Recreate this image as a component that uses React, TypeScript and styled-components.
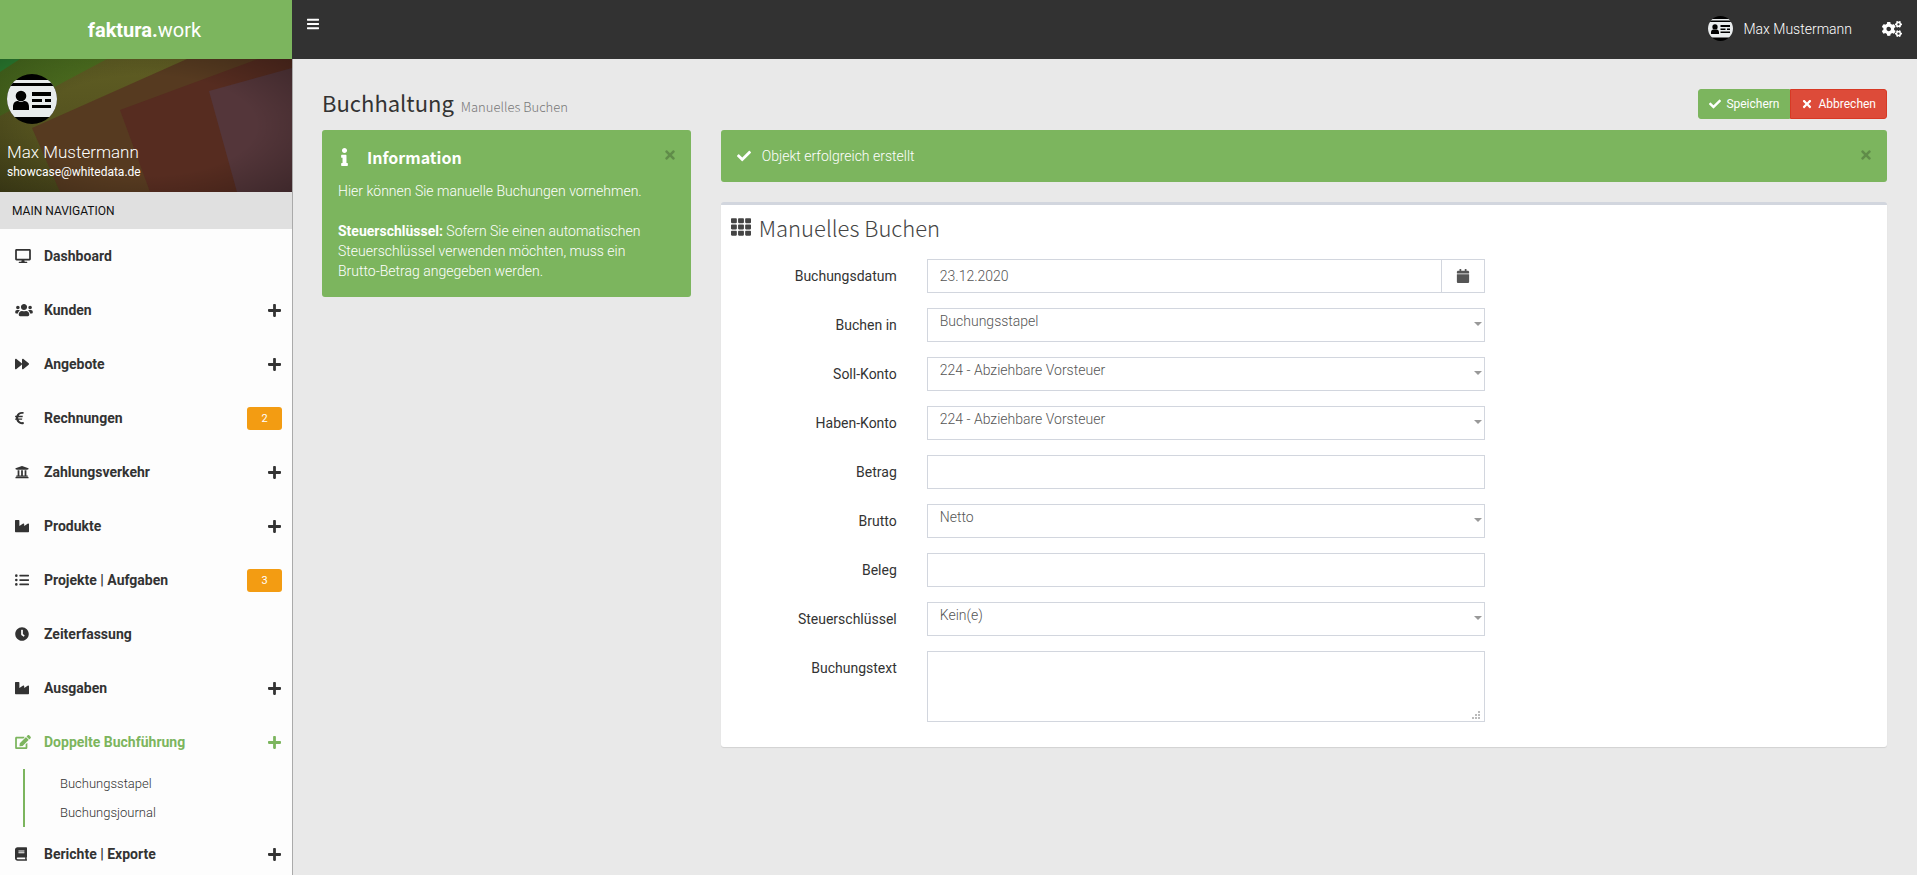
import React from "react";
import styled, { createGlobalStyle, css } from "styled-components";
import {
  FaBars,
  FaBook,
  FaCalendar,
  FaCheck,
  FaClock,
  FaCogs,
  FaDesktop,
  FaEdit,
  FaEuroSign,
  FaForward,
  FaIndustry,
  FaInfo,
  FaListUl,
  FaPlus,
  FaTh,
  FaTimes,
  FaUniversity,
  FaUsers,
} from "react-icons/fa";

const green = "#7cb55e";
const dark = "#333333";
const heading = `"Source Sans Pro", "Noto Sans CJK SC", "Noto Sans", sans-serif`;

const GlobalStyle = createGlobalStyle`
  *, *::before, *::after { box-sizing: border-box; }
  html, body, #root { height: 100%; }
  body {
    margin: 0;
    overflow: hidden;
    background: #e9e9e9;
    color: ${dark};
    font: 300 14px/20px Roboto, sans-serif;
  }
  h1, h2, h3, p, ul { margin: 0; padding: 0; }
  ul { list-style: none; }
  a { color: inherit; text-decoration: none; }
  button, input, select, textarea { font: inherit; margin: 0; border-radius: 0; }
`;

const Icon = styled.span<{ $size?: number; $width?: number }>`
  display: inline-flex;
  align-items: center;
  svg {
    flex: none;
    height: ${(p) => p.$size ?? 14}px;
    width: ${(p) => p.$width ?? p.$size ?? 14}px;
  }
`;

const Shell = styled.div`
  display: flex;
  height: 100%;
`;

const Sidebar = styled.aside`
  flex: 0 0 293px;
  display: flex;
  flex-direction: column;
  overflow: hidden;
  background: #fdfdfd;
`;

const Brand = styled.a`
  flex: 0 0 59px;
  display: flex;
  align-items: center;
  justify-content: center;
  padding-right: 4px;
  background: ${green};
  color: #fff;
  font-size: 20px;
  font-weight: 400;
  b { font-weight: 700; }
`;

const SidebarBody = styled.div`
  flex: 1 0 auto;
  border-right: 1px solid #aaa;
`;

const UserPanel = styled.section`
  position: relative;
  height: 133px;
  padding: 15px 7px;
  color: #fff;
`;

const Backdrop = styled.svg`
  position: absolute;
  inset: 0;
  width: 100%;
  height: 100%;
`;

const UserInfo = styled.div`
  position: relative;
  display: flex;
  flex-direction: column;
`;

const UserName = styled.span`
  margin-top: 18px;
  font-size: 17px;
  font-weight: 300;
`;

const UserMail = styled.span`
  font-size: 12px;
  font-weight: 400;
`;

const NavLabel = styled.h2`
  height: 37px;
  padding: 0 12px;
  background: #e0e0e0;
  color: #111;
  font-size: 12px;
  font-weight: 400;
  line-height: 38px;
`;

const NavLink = styled.a<{ $active?: boolean }>`
  display: flex;
  align-items: center;
  height: 54px;
  padding: 0 11px 0 15px;
  color: ${(p) => (p.$active ? green : dark)};
  font-weight: 700;
`;

const NavIcon = styled(Icon)`
  flex: 0 0 29px;
`;

const NavText = styled.span`
  flex: 1;
`;

const Count = styled.span`
  width: 35px;
  height: 23px;
  border-radius: 3px;
  margin-right: -1px;
  background: #f39c12;
  color: #fff;
  font-size: 11px;
  font-weight: 400;
  line-height: 23px;
  text-align: center;
`;

const SubMenu = styled.ul`
  margin-left: 23px;
  border-left: 2px solid ${green};
`;

const SubLink = styled.a`
  display: block;
  padding: 5px 0 4px 35px;
  font-size: 13px;
`;

const Main = styled.div`
  flex: 1;
  min-width: 0;
  display: flex;
  flex-direction: column;
`;

const TopBar = styled.header`
  flex: 0 0 59px;
  display: flex;
  justify-content: space-between;
  margin-left: -1px;
  background: #323232;
  color: #fff;
`;

const BarButton = styled.button`
  display: flex;
  align-items: center;
  gap: 10px;
  padding: 0 15px;
  border: 0;
  background: none;
  color: #fff;
`;

const MenuButton = styled(BarButton)`
  align-self: flex-start;
  height: 48px;
`;

const Account = styled.div`
  display: flex;
  height: 57px;
`;

const Page = styled.main`
  padding: 30px 30px 30px 29px;
`;

const PageHead = styled.div`
  display: flex;
  align-items: center;
  justify-content: space-between;
  height: 41px;
  padding-bottom: 11px;
`;

const PageTitle = styled.h1`
  font: 400 22px/28px ${heading};
  small {
    padding-left: 2px;
    color: #777;
    font-size: 13px;
    font-weight: 300;
  }
`;

const Actions = styled.div`
  display: flex;
`;

const Action = styled.button<{ $danger?: boolean }>`
  display: flex;
  align-items: center;
  gap: 5px;
  height: 30px;
  padding: 0 10px;
  border: 1px solid ${(p) => (p.$danger ? "#d73925" : green)};
  border-radius: ${(p) => (p.$danger ? "0 3px 3px 0" : "3px 0 0 3px")};
  background: ${(p) => (p.$danger ? "#dd4b39" : green)};
  color: #fff;
  font-size: 12px;
  font-weight: 400;
`;

const Row = styled.div`
  display: flex;
  align-items: flex-start;
  margin: 0 -15px;
`;

const Col = styled.div<{ $share: number }>`
  flex: 0 0 ${(p) => p.$share}%;
  min-width: 0;
  padding: 0 15px;
`;

const Alert = styled.section`
  padding: 16px;
  border-radius: 3px;
  background: ${green};
  color: #fff;
`;

const AlertHead = styled.div`
  display: flex;
  align-items: center;
  min-height: 20px;
`;

const AlertTitle = styled.h3`
  flex: 1;
  font: 700 16px/22px ${heading};
`;

const AlertText = styled.p`
  flex: 1;
  padding-left: 11px;
`;

const InfoText = styled.p`
  margin-top: 13px;
  b { font-weight: 700; }
`;

const NoBreak = styled.span`
  white-space: nowrap;
`;

const InfoIcon = styled(Icon)`
  flex: 0 0 29px;
  padding-left: 3px;
`;

const Close = styled.button`
  align-self: flex-start;
  display: flex;
  padding: 2px 0;
  border: 0;
  background: none;
  color: #000;
  opacity: 0.22;
`;

const Box = styled.section`
  margin-top: 20px;
  border-top: 3px solid #d2d6de;
  border-radius: 3px;
  background: #fff;
  box-shadow: 0 1px 1px rgba(0, 0, 0, 0.1);
`;

const BoxHead = styled.div`
  display: flex;
  align-items: center;
  gap: 8px;
  height: 44px;
  padding: 0 10px;
  color: #444;
`;

const BoxTitle = styled.h2`
  font: 300 22px/28px ${heading};
`;

const Form = styled.form`
  display: flex;
  flex-direction: column;
  gap: 15px;
  padding: 10px 10px 25px;
`;

const Field = styled.div`
  display: flex;
  margin: 0 -15px;
`;

const Label = styled.label`
  flex: 0 0 calc(100% / 6);
  padding: 7px 15px 0;
  font-weight: 400;
  text-align: right;
`;

const Control = styled.div`
  flex: 0 0 50%;
  display: flex;
  position: relative;
  padding: 0 15px;
`;

const control = css`
  display: block;
  flex: 1;
  min-width: 0;
  height: 34px;
  padding: 6px 12px;
  border: 1px solid #d2d6de;
  background: #fff;
  color: #555;
  outline: none;
`;

const Input = styled.input`
  ${control}
`;

const Select = styled.select`
  ${control}
  appearance: none;
  padding: 0 20px 8px 12px;
`;

const Arrow = styled.span`
  position: absolute;
  right: 18px;
  top: 14px;
  border: 4px solid transparent;
  border-top: 4px solid #999;
  border-bottom: 0;
  pointer-events: none;
`;

const TextArea = styled.textarea`
  ${control}
  height: 71px;
  resize: none;
`;

const Grip = styled.svg`
  position: absolute;
  right: 20px;
  bottom: 3px;
  pointer-events: none;
`;

const CalendarButton = styled.button`
  display: flex;
  align-items: center;
  justify-content: center;
  width: 43px;
  border: 1px solid #d2d6de;
  border-left: 0;
  background: #fff;
  color: #555;
`;

const Avatar = ({ size, id }: { size: number; id: string }) => (
  <svg width={size} height={size} viewBox="0 0 50 50" aria-hidden="true">
    <clipPath id={id}>
      <circle cx="25" cy="25" r="25" />
    </clipPath>
    <g clipPath={`url(#${id})`}>
      <rect width="50" height="50" fill="#000" />
      <rect y="6" width="50" height="37" fill="#e9eced" />
      <rect y="9" width="50" height="3" fill="#000" />
      <circle cx="14" cy="22" r="5.3" fill="#000" />
      <path d="M6 36v-3c0-4 2-6 5-6q3 2 6 0c3 0 5 2 5 6v3z" fill="#000" />
      <path d="M25 18h19v4H25zM25 25h10v3H25zM38 25h6v3h-6zM25 31h19v3H25z" fill="#000" />
    </g>
  </svg>
);

const PanelBackdrop = () => (
  <Backdrop viewBox="0 0 292 133" preserveAspectRatio="none" aria-hidden="true">
    <defs>
      <linearGradient id="base" x1="0" y1="0" x2="0.3" y2="1">
        <stop offset="0" stopColor="#4e7420" />
        <stop offset="1" stopColor="#3f4a19" />
      </linearGradient>
      <linearGradient id="olive" x1="0" y1="0" x2="0" y2="1">
        <stop offset="0" stopColor="#5f5d23" />
        <stop offset="1" stopColor="#4a481b" />
      </linearGradient>
      <radialGradient id="shade" cx="0.5" cy="0.5" r="0.75">
        <stop offset="0.5" stopColor="#000" stopOpacity="0" />
        <stop offset="1" stopColor="#000" stopOpacity="0.3" />
      </radialGradient>
    </defs>
    <rect width="292" height="133" fill="url(#base)" />
    <path d="M0 0H20L0 13z" fill="#2f8a35" />
    <path d="M0 57L107 0H292V133H0z" fill="url(#olive)" />
    <path d="M187 0H292V133H60L32 69z" fill="#563a20" />
    <path d="M258 0H292V133H150L120 51z" fill="#562c20" />
    <path d="M209 32L292 9V133H237z" fill="#54363a" />
    <rect width="292" height="133" fill="url(#shade)" />
  </Backdrop>
);

type Entry = {
  text: string;
  icon: React.ReactNode;
  width?: number;
  plus?: boolean;
  count?: number;
  active?: boolean;
  children?: string[];
};

const entries: Entry[] = [
  { text: "Dashboard", icon: <FaDesktop />, width: 16 },
  { text: "Kunden", icon: <FaUsers />, width: 18, plus: true },
  { text: "Angebote", icon: <FaForward />, plus: true },
  { text: "Rechnungen", icon: <FaEuroSign />, width: 9, count: 2 },
  { text: "Zahlungsverkehr", icon: <FaUniversity />, plus: true },
  { text: "Produkte", icon: <FaIndustry />, plus: true },
  { text: "Projekte | Aufgaben", icon: <FaListUl />, count: 3 },
  { text: "Zeiterfassung", icon: <FaClock /> },
  { text: "Ausgaben", icon: <FaIndustry />, plus: true },
  {
    text: "Doppelte Buchführung",
    icon: <FaEdit />,
    width: 16,
    plus: true,
    active: true,
    children: ["Buchungsstapel", "Buchungsjournal"],
  },
  { text: "Berichte | Exporte", icon: <FaBook />, width: 12, plus: true },
];

const SelectField = ({ id, label, value }: { id: string; label: string; value: string }) => (
  <Field>
    <Label htmlFor={id}>{label}</Label>
    <Control>
      <Select id={id} defaultValue={value}>
        <option>{value}</option>
      </Select>
      <Arrow />
    </Control>
  </Field>
);

const TextField = ({ id, label }: { id: string; label: string }) => (
  <Field>
    <Label htmlFor={id}>{label}</Label>
    <Control>
      <Input id={id} type="text" />
    </Control>
  </Field>
);

const CloseButton = ({ label }: { label: string }) => (
  <Close type="button" aria-label={label}>
    <Icon $width={10}>
      <FaTimes />
    </Icon>
  </Close>
);

export default function App() {
  return (
    <>
      <GlobalStyle />
      <Shell>
        <Sidebar>
          <Brand href="#">
            <span>
              <b>faktura.</b>work
            </span>
          </Brand>
          <SidebarBody>
            <UserPanel>
              <PanelBackdrop />
              <UserInfo>
                <Avatar size={50} id="avatar-large" />
                <UserName>Max Mustermann</UserName>
                <UserMail>showcase@whitedata.de</UserMail>
              </UserInfo>
            </UserPanel>
            <NavLabel>MAIN NAVIGATION</NavLabel>
            <nav>
              <ul>
                {entries.map((e) => (
                  <li key={e.text}>
                    <NavLink href="#" $active={e.active}>
                      <NavIcon $width={e.width}>{e.icon}</NavIcon>
                      <NavText>{e.text}</NavText>
                      {e.plus && (
                        <Icon $width={13} $size={15}>
                          <FaPlus />
                        </Icon>
                      )}
                      {e.count && <Count>{e.count}</Count>}
                    </NavLink>
                    {e.children && (
                      <SubMenu>
                        {e.children.map((c) => (
                          <li key={c}>
                            <SubLink href="#">{c}</SubLink>
                          </li>
                        ))}
                      </SubMenu>
                    )}
                  </li>
                ))}
              </ul>
            </nav>
          </SidebarBody>
        </Sidebar>
        <Main>
          <TopBar>
            <MenuButton type="button" aria-label="Navigation umschalten">
              <Icon $width={12}>
                <FaBars />
              </Icon>
            </MenuButton>
            <Account>
              <BarButton type="button">
                <Avatar size={25} id="avatar-small" />
                Max Mustermann
              </BarButton>
              <BarButton type="button" aria-label="Einstellungen">
                <Icon $size={16} $width={20}>
                  <FaCogs />
                </Icon>
              </BarButton>
            </Account>
          </TopBar>
          <Page>
            <PageHead>
              <PageTitle>
                Buchhaltung <small>Manuelles Buchen</small>
              </PageTitle>
              <Actions>
                <Action type="submit" form="booking">
                  <Icon $size={12}>
                    <FaCheck />
                  </Icon>
                  Speichern
                </Action>
                <Action type="button" $danger>
                  <Icon $size={12}>
                    <FaTimes />
                  </Icon>
                  Abbrechen
                </Action>
              </Actions>
            </PageHead>
            <Row>
              <Col $share={25}>
                <Alert>
                  <AlertHead>
                    <InfoIcon $size={18} $width={7}>
                      <FaInfo />
                    </InfoIcon>
                    <AlertTitle>Information</AlertTitle>
                    <CloseButton label="Information schließen" />
                  </AlertHead>
                  <InfoText>
                    Hier können Sie manuelle Buchungen vornehmen.
                    <br />
                    <br />
                    <b>Steuerschlüssel:</b> Sofern Sie einen automatischen Steuerschlüssel verwenden
                    möchten, muss ein <NoBreak>Brutto-Betrag</NoBreak> angegeben werden.
                  </InfoText>
                </Alert>
              </Col>
              <Col $share={75}>
                <Alert role="status">
                  <AlertHead>
                    <Icon>
                      <FaCheck />
                    </Icon>
                    <AlertText>Objekt erfolgreich erstellt</AlertText>
                    <CloseButton label="Meldung schließen" />
                  </AlertHead>
                </Alert>
                <Box>
                  <BoxHead>
                    <Icon $size={20}>
                      <FaTh />
                    </Icon>
                    <BoxTitle>Manuelles Buchen</BoxTitle>
                  </BoxHead>
                  <Form id="booking" onSubmit={(e) => e.preventDefault()}>
                    <Field>
                      <Label htmlFor="date">Buchungsdatum</Label>
                      <Control>
                        <Input id="date" type="text" defaultValue="23.12.2020" />
                        <CalendarButton type="button" aria-label="Kalender öffnen">
                          <Icon>
                            <FaCalendar />
                          </Icon>
                        </CalendarButton>
                      </Control>
                    </Field>
                    <SelectField id="target" label="Buchen in" value="Buchungsstapel" />
                    <SelectField id="debit" label="Soll-Konto" value="224 - Abziehbare Vorsteuer" />
                    <SelectField id="credit" label="Haben-Konto" value="224 - Abziehbare Vorsteuer" />
                    <TextField id="amount" label="Betrag" />
                    <SelectField id="gross" label="Brutto" value="Netto" />
                    <TextField id="receipt" label="Beleg" />
                    <SelectField id="tax" label="Steuerschlüssel" value="Kein(e)" />
                    <Field>
                      <Label htmlFor="note">Buchungstext</Label>
                      <Control>
                        <TextArea id="note" />
                        <Grip width="8" height="8" aria-hidden="true">
                          <path
                            d="M6 0h2v2H6zM3 3h2v2H3zM6 3h2v2H6zM0 6h2v2H0zM3 6h2v2H3zM6 6h2v2H6z"
                            fill="#bbb"
                          />
                        </Grip>
                      </Control>
                    </Field>
                  </Form>
                </Box>
              </Col>
            </Row>
          </Page>
        </Main>
      </Shell>
    </>
  );
}
